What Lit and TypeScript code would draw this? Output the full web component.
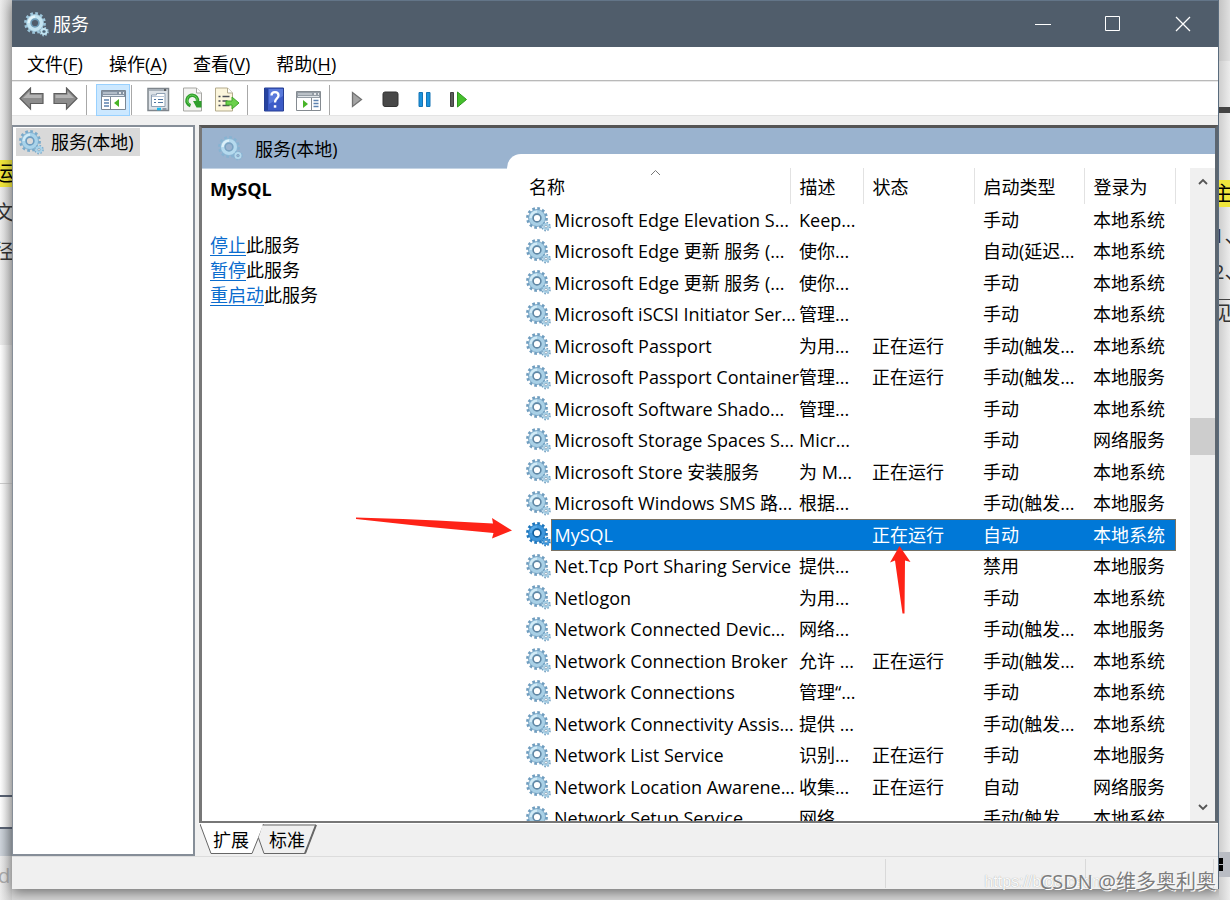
import { LitElement, html, css, svg, nothing } from "lit";
import { customElement, property, state } from "lit/decorators.js";

type Service = [name: string, desc: string, status: string, startup: string, logon: string];

const RUN = "正在运行";
const SYS = "本地系统";
const LOCAL = "本地服务";
const NET = "网络服务";
const MANUAL = "手动";
const TRIGGER = "手动(触发...";

const SERVICES: Service[] = [
  ["Microsoft Edge Elevation S...", "Keep...", "", MANUAL, SYS],
  ["Microsoft Edge 更新 服务 (...", "使你...", "", "自动(延迟...", SYS],
  ["Microsoft Edge 更新 服务 (...", "使你...", "", MANUAL, SYS],
  ["Microsoft iSCSI Initiator Ser...", "管理...", "", MANUAL, SYS],
  ["Microsoft Passport", "为用...", RUN, TRIGGER, SYS],
  ["Microsoft Passport Container", "管理...", RUN, TRIGGER, LOCAL],
  ["Microsoft Software Shado...", "管理...", "", MANUAL, SYS],
  ["Microsoft Storage Spaces S...", "Micr...", "", MANUAL, NET],
  ["Microsoft Store 安装服务", "为 M...", RUN, MANUAL, SYS],
  ["Microsoft Windows SMS 路...", "根据...", "", TRIGGER, LOCAL],
  ["MySQL", "", RUN, "自动", SYS],
  ["Net.Tcp Port Sharing Service", "提供...", "", "禁用", LOCAL],
  ["Netlogon", "为用...", "", MANUAL, SYS],
  ["Network Connected Devic...", "网络...", "", TRIGGER, LOCAL],
  ["Network Connection Broker", "允许 ...", RUN, TRIGGER, SYS],
  ["Network Connections", "管理“...", "", MANUAL, SYS],
  ["Network Connectivity Assis...", "提供 ...", "", TRIGGER, SYS],
  ["Network List Service", "识别...", RUN, MANUAL, LOCAL],
  ["Network Location Awarene...", "收集...", RUN, "自动", NET],
  ["Network Setup Service", "网络...", "", TRIGGER, SYS],
];

@customElement("gear-icon")
class GearIcon extends LitElement {
  @property() tone = "normal";

  static styles = css`
    :host { display: block; width: 25px; height: 25px; flex: none; }
    svg { display: block; width: 100%; height: 100%; }
  `;

  render() {
    const tones: Record<string, string[]> = {
      normal: ["#6f9dbf", "#a9d0e6", "#5f87a5", "#ffffff", "#d3ebf6"],
      selected: ["#1d76bd", "#3f97dc", "#0f5f9f", "#ffffff", "#5aaae6"],
      title: ["#9cc5da", "#c3e4f1", "#6f9db8", "#505d6b", "#e4f5fb"],
      pale: ["#86b3d2", "#b5daee", "#7aa3c2", "#9ab3cf", "#dcf0f9"],
      tree: ["#78aacb", "#a9d3ea", "#6c9cc0", "#d9d9d9", "#d0ebf7"],
    };
    const [edge, body, rim, hole, shine] = tones[this.tone];
    return html`<svg viewBox="0 0 25 25" aria-hidden="true">
      <circle cx="11" cy="11" r="9.4" fill="none" stroke=${edge} stroke-width="3" stroke-dasharray="2.6 2.32" />
      <circle cx="11" cy="11" r="8.5" fill=${body} stroke=${edge} stroke-width="0.8" />
      <path d="M4.6 11a6.4 6.4 0 0 1 6.4-6.4" fill="none" stroke=${shine} stroke-width="2.4" />
      <circle cx="11" cy="11" r="3.9" fill=${hole} stroke=${rim} stroke-width="1.6" />
      <circle cx="20" cy="19.6" r="3.8" fill="none" stroke=${edge} stroke-width="2" stroke-dasharray="1.5 1.48" />
      <circle cx="20" cy="19.6" r="2.5" fill=${hole} stroke=${body} stroke-width="2" />
      <circle cx="20" cy="19.6" r="1.3" fill=${hole} stroke=${rim} stroke-width="0.6" />
    </svg>`;
  }
}

const arrow = svg`<path d="M1 11.500 11.500 1v5.500H24v10H11.500V22z" fill="#8c8c8c" stroke="#5e5e5e" stroke-width="1.200" /><path d="M4 11 10.500 4.600V8H22.500v3z" fill="#b4b4b4" />`;

const ICONS: Record<string, unknown> = {
  back: svg`<g>${arrow}</g>`,
  forward: svg`<g transform="translate(25 0) scale(-1 1)">${arrow}</g>`,
  tree: svg`<path d="M.5 3.500h24v19H.5z" fill="#fff" stroke="#7b8794"/><path d="M1 4h23v6H1z" fill="#8593a3"/><path d="M2 6h14M2 8.500h21" stroke="#dfe6ee"/><path d="M18 6h2m2 0h1" stroke="#fff" stroke-width="1.600"/><path d="M9.500 10v12" stroke="#7b8794"/><path d="M3 13h5M3 16h5M3 19h5" stroke="#5c82b0" stroke-width="1.500"/><path d="M18 12v8l-5-4z" fill="#47b427"/>`,
  props: svg`<path d="M2 1.500h20.500v22H2z" fill="#dde2e7" stroke="#7f868d" stroke-width="1.500"/><path d="M3 3h18" stroke="#aab2ba" stroke-width="2"/><path d="M18 3h2" stroke="#444" stroke-width="1.600"/><path d="M5.500 8h5V6.500h8.500v13H5.500z" fill="#fff" stroke="#8fa0b3"/><path d="M6 9.500h12" stroke="#b8c6d8"/><path d="M8 12.500h2m2 0h5M8 15.500h2m2 0h5" stroke="#51759f" stroke-width="1.200"/><path d="M11 22h4" stroke="#1fb9ec" stroke-width="2.500"/><path d="M16.500 22h4" stroke="#8d98a5" stroke-width="2"/>`,
  refresh: svg`<path d="M3.500 1h13l5 5v18h-18z" fill="#f3f3f1" stroke="#a7a7a3"/><path d="M16.500 1v5h5" fill="#fff" stroke="#a7a7a3"/><path d="M10.500 18.600a5.300 5.300 0 1 1 7-4.600" fill="none" stroke="#2f9e2c" stroke-width="3.400"/><path d="M9.500 17.500a5 5 0 1 1 7.600-4" fill="none" stroke="#66cf55"/><path d="M13 14h8.500v6.500h-5z" fill="#2f9e2c"/>`,
  exp: svg`<path d="M1.500 1h12l5 5v18h-17z" fill="#fcf6dc" stroke="#b3aa8c"/><path d="M13.500 1v5h5" fill="#fff" stroke="#b3aa8c"/><path d="M4.500 9.500h2m2 0h7M4.500 14h2m2 0h5M4.500 18.500h2m2 0h7" stroke="#4c4f57" stroke-width="1.500"/><path d="M12 14h6v-4l7 6-7 6v-4h-6z" fill="#6bd04b" stroke="#41a62a"/>`,
  help: svg`<path d="M2.500 1h19v23h-19z" fill="#3c5bc7" stroke="#263f93"/><path d="M3 1.500h3v22H3z" fill="#25429f"/><path d="M7 2h14v7L7 17z" fill="#5a7adb"/><path d="M9.500 8.500c0-4.500 7-4.500 7 0 0 3-3.500 3-3.500 7" fill="none" stroke="#fff" stroke-width="2.300"/><path d="M11.800 18.200h2.500v2.500h-2.500z" fill="#fff"/>`,
  action: svg`<path d="M.5 4.500h24v19H.5z" fill="#fff" stroke="#858b91"/><path d="M1 5h23v6H1z" fill="#959da5"/><path d="M2 7h14M2 9.500h21" stroke="#e1e5e9"/><path d="M18 7h2m2 0h1" stroke="#fff" stroke-width="1.600"/><path d="M15.500 11v12" stroke="#858b91"/><path d="M17.500 13.500h5M17.500 16.500h5M17.500 19.500h5" stroke="#5c82b0" stroke-width="1.500"/><path d="M7 13v8l5-4z" fill="#47b427"/>`,
  play: svg`<path d="M8.500 5.500v14l9-7z" fill="#a4a4a4" stroke="#727272" stroke-width="1.300"/>`,
  stop: svg`<rect x="5" y="5" width="15" height="14.500" rx="2" fill="#484848" stroke="#333"/>`,
  pause: svg`<path d="M7 5.500h3.500v14H7zM14.500 5.500H18v14h-3.500z" fill="#1c93dc" stroke="#1574b5"/>`,
  restart: svg`<path d="M4.500 5.500h3v14h-3z" fill="#5b5b5b" stroke="#404040"/><path d="M11.500 5v15l9-7.500z" fill="#45bf2c" stroke="#2f9820"/>`,
};

@customElement("app-root")
class AppRoot extends LitElement {
  @state() private selected = 10;

  static styles = css`
    :host {
      display: block;
      font-family: "Open Sans", "Noto Sans CJK SC", sans-serif;
      font-size: 18px;
      line-height: 24px;
      color: #000;
    }
    * { box-sizing: border-box; }
    button { font: inherit; color: inherit; background: none; border: 0; padding: 0; margin: 0; }
    .desktop {
      position: relative;
      display: grid;
      grid-template-columns: 12px minmax(0, 1fr) 11px;
      grid-template-rows: minmax(0, 1fr);
      height: 100vh;
      overflow: hidden;
      background: linear-gradient(#dadada, #dadada) bottom / 100% 11px no-repeat;
    }
    .edge { display: flex; flex-direction: column; overflow: hidden; color: #333; white-space: nowrap; font-size: 20px; }
    .edge span { display: block; flex: none; text-indent: -6px; line-height: 27px; }
    .edge.left { background: linear-gradient(90deg, #ededed, #cfcfcf); padding-top: 160px; }
    .edge .mark { background: #f0e63c; color: #000; margin-bottom: 6px; }
    .edge .line { height: 39px; line-height: 39px; }
    .edge .fill { height: 74px; }
    .paper { flex: none; height: 139px; background: linear-gradient(90deg, #fff, #d9d9d9); border-bottom: 1px solid #ccc; }
    .paper.tall { height: 313px; border-bottom: 2px solid #596273; }
    .paper.short { height: 32px; border-bottom: 2px solid #596273; }
    .slate { flex: none; height: 27px; background: linear-gradient(90deg, #cfd5dc, #a5acb3); }
    .edge .faded { height: 42px; line-height: 40px; color: #aaa; text-indent: -2px; }
    .edge.right { background: linear-gradient(90deg, #cecece, #ececec); }
    .edge .top { height: 61px; background: linear-gradient(90deg, #c4c4c4, #e0e0e0); }
    .edge .gap { height: 46px; }
    .edge .bar { height: 6px; background: #444; }
    .edge .gap2 { height: 67px; }
    .edge.right .mark { margin-bottom: 11px; }
    .edge .num { height: 36px; line-height: 36px; }
    .edge .rule { height: 26px; margin-top: 9px; border-top: 1px solid #444; }
    .edge .low { height: 527px; }
    .edge .task { height: 25px; background: #b9bcc3; }
    .task svg { display: block; width: 4px; height: 25px; }

    .window {
      display: flex;
      flex-direction: column;
      min-width: 0;
      margin-bottom: 11px;
      background: #f0f0f0;
      border-right: 1px solid #596b7d;
      box-shadow: 0 4px 12px #0007;
    }
    .titlebar { display: flex; flex: none; align-items: center; height: 47px; background: #505d6b; border-top: 1px solid #637588; color: #fff; padding-left: 12px; }
    .titlebar h1 { flex: 1; margin: 0 0 0 4px; font-size: 18px; font-weight: 400; }
    .winbtn { width: 70px; height: 46px; display: grid; place-items: center; }
    .winbtn svg { display: block; width: 16px; height: 16px; }
    .menubar { display: flex; flex: none; height: 34px; background: #fff; border-bottom: 1px solid #b9b9b9; padding-left: 7px; }
    .menubar button { padding: 0 8px; margin-right: 10px; height: 34px; }
    .menubar u { text-underline-offset: 3px; text-decoration-thickness: 1px; }
    .toolbar { display: flex; flex: none; align-items: center; height: 35px; background: #fff; border-bottom: 1px solid #e4e4e4; border-top: 1px solid #e8e8e8; padding: 2px 0 0 2px; }
    .tool { width: 34px; height: 32px; flex: none; display: grid; place-items: center; }
    .tool.on { background: #cce8ff; border: 1px solid #99d1ff; }
    .tool svg { display: block; width: 25px; height: 25px; }
    .sep { width: 1px; height: 30px; background: #a8a8a8; margin: 0 9px 0 4px; flex: none; }
    .sep.after { margin: 0 9px 0 1px; }

    .main { flex: 1; min-height: 0; display: grid; grid-template-columns: 183px minmax(0, 1fr); grid-template-rows: minmax(0, 1fr); gap: 4px; padding-top: 9px; }
    .tree { background: #fff; border: 2px solid #868e98; border-left-width: 1px; padding: 1px 3px; min-height: 0; }
    .node { display: flex; align-items: center; gap: 7px; width: max-content; height: 28px; background: #d9d9d9; padding: 0 6px 0 3px; }
    .right { display: flex; flex-direction: column; min-height: 0; min-width: 0; }
    .frame {
      flex: 1; min-height: 0;
      display: grid;
      grid-template-columns: 305px minmax(0, 1fr);
      grid-template-rows: minmax(0, 1fr);
      border: 3px solid #777;
      border-top-color: #555;
      border-right-color: #5c6670;
      border-bottom-width: 2px;
      background: #9ab3cf;
      overflow: hidden;
    }
    .info { display: flex; flex-direction: column; min-height: 0; }
    .crumb { display: flex; flex: none; align-items: center; gap: 12px; height: 40px; padding: 1px 0 0 16px; }
    .detail { flex: 1; background: #fff; border-top: 1px solid #c3d3e4; padding: 8px 8px 0; }
    .detail h2 { margin: 0 0 32px; font-size: 18px; line-height: 24px; font-weight: 700; }
    .detail p { margin: 0; line-height: 25px; }
    .detail a { color: #0a6cce; text-underline-offset: 3px; }
    .listing { display: flex; min-height: 0; margin-top: 26px; padding-top: 14px; padding-left: 12px; background: #fff; border-top-left-radius: 14px; overflow: hidden; }
    .rows { flex: 1; min-width: 0; overflow: hidden; }
    table { border-collapse: collapse; table-layout: fixed; width: 656px; }
    td, th { padding: 0 0 0 9px; white-space: nowrap; font-weight: 400; text-align: left; overflow: visible; }
    th { height: 36px; border-right: 1px solid #e2e2e2; position: relative; padding-top: 1px; }
    th:first-child { padding-left: 10px; }
    .sort { position: absolute; left: 131px; top: 0; width: 11px; height: 8px; }
    .c0 { width: 32px; }
    .c1 { width: 239px; }
    .c2 { width: 73px; }
    .c3 { width: 111px; }
    .c4 { width: 110px; }
    .c5 { width: 91px; }
    tbody tr { height: 31px; }
    tbody tr:nth-child(even) { height: 32px; }
    td.ico { padding-left: 7px; }
    td.name { padding-left: 3px; }
    tr.sel td:not(.ico) { color: #fff; background: #0078d7; border-top: 1px solid #7a7263; border-bottom: 1px solid #7a7263; }
    tr.sel td.name { border-left: 1px solid #7a7263; }
    tr.sel td:last-child { border-right: 1px solid #7a7263; }
    .scroll { width: 25px; flex: none; background: #f0f0f0; display: grid; grid-template-rows: 27px 223px 37px 1fr 28px; }
    .scroll button { display: grid; place-items: center; }
    .scroll svg { width: 12px; height: 12px; display: block; }
    .thumb { grid-row: 3; background: #cdcdcd; }
    .down { grid-row: 5; }
    .tabs { display: flex; flex: none; height: 33px; padding-left: 1px; border-top: 1px solid #fff; }
    .tab { position: relative; width: 62px; height: 32px; }
    .tab.next { margin-left: -6px; }
    .tab svg { position: absolute; inset: 0; width: 64px; height: 32px; }
    .tab b { position: relative; font-weight: 400; }
    .status { flex: none; display: grid; grid-template-columns: minmax(0, 1fr) 200px 128px 4px; height: 33px; border-top: 1px solid #dcdcdc; }
    .status span { border-right: 1px solid #d9d9d9; margin: 2px 0 1px; }
    .pointer { position: absolute; left: 355px; top: 516px; width: 160px; height: 24px; }
    .pointer.up { left: 890px; top: 546px; width: 22px; height: 70px; }
    .credit { position: absolute; right: 14px; bottom: 4px; font-size: 20px; line-height: 28px; color: #7d7d7d; text-shadow: 1px 1px 0 #fff; }
    .url { position: absolute; right: 98px; bottom: 6px; font-family: "Liberation Sans", sans-serif; font-size: 16px; color: #fafafa; text-shadow: 0 0 1px #999; }
  `;

  private icon(name: string) {
    return html`<svg viewBox="0 0 25 25" aria-hidden="true">${ICONS[name]}</svg>`;
  }

  private tool(name: string, label: string, on = false) {
    return html`<button class="tool ${on ? "on" : ""}" aria-label=${label}>${this.icon(name)}</button>`;
  }

  private row(s: Service, i: number) {
    const sel = i === this.selected;
    return html`<tr class=${sel ? "sel" : nothing} @click=${() => (this.selected = i)}>
      <td class="ico"><gear-icon tone=${sel ? "selected" : "normal"}></gear-icon></td>
      <td class="name">${s[0]}</td>
      <td>${s[1]}</td><td>${s[2]}</td><td>${s[3]}</td><td>${s[4]}</td>
    </tr>`;
  }

  render() {
    return html`<div class="desktop">
      <div class="edge left">
        <span class="mark">运</span><span class="line">文</span><span class="line">径</span><span class="fill"></span>
        <div class="paper"></div><div class="paper tall"></div><div class="paper short"></div>
        <div class="slate"></div><span class="faded">d</span>
      </div>
      <div class="window">
        <header class="titlebar">
          <gear-icon tone="title"></gear-icon>
          <h1>服务</h1>
          <button class="winbtn" aria-label="最小化"><svg viewBox="0 0 16 16"><path d="M0 8.500h16" stroke="#fff" /></svg></button>
          <button class="winbtn" aria-label="最大化"><svg viewBox="0 0 16 16"><path d="M.5 .5h14v14h-14z" fill="none" stroke="#fff" /></svg></button>
          <button class="winbtn" aria-label="关闭"><svg viewBox="0 0 16 16"><path d="M1 1l14 14M15 1L1 15" stroke="#fff" stroke-width="1.300" /></svg></button>
        </header>
        <nav class="menubar">
          <button>文件(<u>F</u>)</button><button>操作(<u>A</u>)</button><button>查看(<u>V</u>)</button><button>帮助(<u>H</u>)</button>
        </nav>
        <div class="toolbar">
          ${this.tool("back", "后退")}${this.tool("forward", "前进")}<i class="sep"></i>
          ${this.tool("tree", "显示/隐藏控制台树", true)}<i class="sep after"></i>
          ${this.tool("props", "属性")}${this.tool("refresh", "刷新")}${this.tool("exp", "导出列表")}<i class="sep"></i>
          ${this.tool("help", "帮助")}${this.tool("action", "显示/隐藏操作窗格")}<i class="sep"></i>
          ${this.tool("play", "启动服务")}${this.tool("stop", "停止服务")}${this.tool("pause", "暂停服务")}${this.tool("restart", "重启动服务")}
        </div>
        <div class="main">
          <aside class="tree"><div class="node"><gear-icon tone="tree"></gear-icon>服务(本地)</div></aside>
          <div class="right">
            <section class="frame">
              <div class="info">
                <div class="crumb"><gear-icon tone="pale"></gear-icon>服务(本地)</div>
                <div class="detail">
                  <h2>MySQL</h2>
                  <p><a href="#stop">停止</a>此服务</p>
                  <p><a href="#pause">暂停</a>此服务</p>
                  <p><a href="#restart">重启动</a>此服务</p>
                </div>
              </div>
              <div class="listing">
                <div class="rows">
                  <table>
                    <colgroup><col class="c0" /><col class="c1" /><col class="c2" /><col class="c3" /><col class="c4" /><col class="c5" /></colgroup>
                    <thead><tr>
                      <th colspan="2">名称<svg class="sort" viewBox="0 0 11 8"><path d="M1 7l4.500-4.500L10 7" fill="none" stroke="#777" /></svg></th>
                      <th>描述</th><th>状态</th><th>启动类型</th><th>登录为</th>
                    </tr></thead>
                    <tbody>${SERVICES.map((s, i) => this.row(s, i))}</tbody>
                  </table>
                </div>
                <div class="scroll">
                  <button aria-label="向上滚动"><svg viewBox="0 0 12 12"><path d="M2 8l4-4 4 4" fill="none" stroke="#555" stroke-width="1.800" /></svg></button>
                  <div class="thumb"></div>
                  <button class="down" aria-label="向下滚动"><svg viewBox="0 0 12 12"><path d="M2 4l4 4 4-4" fill="none" stroke="#555" stroke-width="1.800" /></svg></button>
                </div>
              </div>
            </section>
            <div class="tabs">
              <button class="tab"><svg viewBox="0 0 64 32"><path d="M0 0L11 29.500H52L64 0" fill="#fff" stroke="#666" /></svg><b>扩展</b></button>
              <button class="tab next"><svg viewBox="0 0 64 32"><path d="M2.500 14L8 29.500H49L60 1H6.500" fill="#f0f0f0" stroke="#666" /><path d="M49 29.500L60 1" stroke="#666" stroke-width="2" /></svg><b>标准</b></button>
            </div>
          </div>
        </div>
        <footer class="status"><span></span><span></span><span></span></footer>
      </div>
      <div class="edge right">
        <span class="top"></span><span class="gap"></span><span class="bar"></span><span class="gap2"></span>
        <span class="mark">主</span><span class="num">1、</span><span class="num">2、</span><span class="rule">见</span>
        <span class="low"></span>
        <span class="task"><svg viewBox="0 0 4 25"><path d="M0 6h4v6H0zM0 13h4v6H0z" /></svg></span>
      </div>
      <svg class="pointer" viewBox="0 0 160 24"><path d="M1 1.500Q60 3 138 7.500L137 2L157 14.500L137 22.500L138.500 17Q70 11 1 3z" fill="#fe2317" /></svg>
      <svg class="pointer up" viewBox="0 0 22 70"><path d="M9.500 0L20.500 16L15 14.500L14.500 67.500H12.500L5 14.500L0 16.500z" fill="#fe2317" /></svg>
      <div class="url">https://blog.csdn.net/</div>
      <div class="credit">CSDN @维多奥利奥</div>
    </div>`;
  }
}
